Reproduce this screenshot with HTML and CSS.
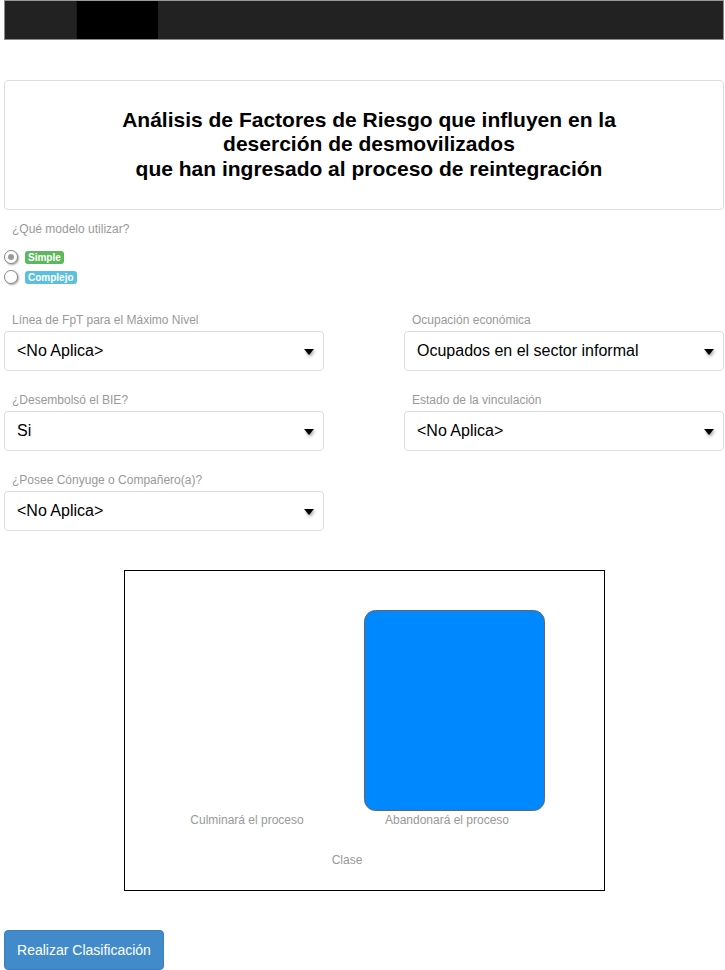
FILE: index.html
```html
<!DOCTYPE html>
<html lang="es">
<head>
<meta charset="utf-8">
<title>Análisis de Factores de Riesgo</title>
<link rel="stylesheet" href="styles.css">
</head>
<body>
<div class="page">
  <nav class="navbar"><div class="brand"></div></nav>

  <div class="panel">
    <h1 class="title">Análisis de Factores de Riesgo que influyen en la<br>deserción de desmovilizados<br>que han ingresado al proceso de reintegración</h1>
  </div>

  <div class="model">
    <div class="label">¿Qué modelo utilizar?</div>
    <div class="radios">
      <div class="radio-row"><span class="radio checked"></span><span class="badge green">Simple</span></div>
      <div class="radio-row"><span class="radio"></span><span class="badge blue">Complejo</span></div>
    </div>
  </div>

  <div class="form-grid">
    <div class="field">
      <div class="label">Línea de FpT para el Máximo Nivel</div>
      <div class="select"><span>&lt;No Aplica&gt;</span><span class="caret"></span></div>
    </div>
    <div class="field">
      <div class="label">Ocupación económica</div>
      <div class="select"><span>Ocupados en el sector informal</span><span class="caret"></span></div>
    </div>
    <div class="field">
      <div class="label">¿Desembolsó el BIE?</div>
      <div class="select"><span>Si</span><span class="caret"></span></div>
    </div>
    <div class="field">
      <div class="label">Estado de la vinculación</div>
      <div class="select"><span>&lt;No Aplica&gt;</span><span class="caret"></span></div>
    </div>
    <div class="field">
      <div class="label">¿Posee Cónyuge o Compañero(a)?</div>
      <div class="select"><span>&lt;No Aplica&gt;</span><span class="caret"></span></div>
    </div>
  </div>

  <div class="chart">
    <svg width="479" height="319" viewBox="0 0 479 319">
      <rect x="239.5" y="39.5" width="180" height="200" rx="11" ry="11" fill="#0088ff" stroke="#666" stroke-width="1"/>
      <text x="122" y="253" class="axis" text-anchor="middle">Culminará el proceso</text>
      <text x="322" y="253" class="axis" text-anchor="middle">Abandonará el proceso</text>
      <text x="222" y="293" class="axis" text-anchor="middle">Clase</text>
    </svg>
  </div>

  <button class="btn">Realizar Clasificación</button>
</div>
</body>
</html>
```

FILE: styles.css
```css
html, body {
  margin: 0;
  padding: 0;
  background: #fff;
  font-family: "Liberation Sans", Arial, sans-serif;
}
.page {
  width: 720px;
  margin-left: 4px;
  display: flex;
  flex-direction: column;
}
.navbar {
  height: 38px;
  background: #222;
  border: 1px solid #8a8a8a;
  border-top: 1px solid #9a9a9a;
  display: flex;
}
.brand {
  width: 81px;
  margin-left: 71px;
  background: #000;
  border-left: 1px solid #1a1a1a;
}
.panel {
  margin-top: 40px;
  height: 128px;
  border: 1px solid #ddd;
  border-radius: 4px;
  display: flex;
  align-items: center;
  justify-content: center;
}
.title {
  margin: 0;
  font-size: 21px;
  font-weight: bold;
  line-height: 24.5px;
  text-align: center;
  color: #000;
  padding: 0 0 1px 10px;
}
.label {
  font-size: 12px;
  color: #999;
  padding-left: 8px;
  line-height: 14px;
}
.model {
  margin-top: 12px;
}
.radios {
  margin-top: 14px;
  display: flex;
  flex-direction: column;
  gap: 6px;
}
.radio-row {
  display: flex;
  align-items: center;
  gap: 7px;
  height: 14px;
}
.radio {
  width: 12px;
  height: 12px;
  border-radius: 50%;
  border: 1px solid #8a8a8a;
  background: #fff;
  box-shadow: 1px 1px 2px rgba(0,0,0,0.35);
  display: flex;
  align-items: center;
  justify-content: center;
}
.radio.checked::after {
  content: "";
  width: 6px;
  height: 6px;
  border-radius: 50%;
  background: #9a9a9a;
}
.badge {
  font-size: 10px;
  font-weight: bold;
  color: #fff;
  padding: 1px 3px;
  border-radius: 3px;
  line-height: 11px;
}
.badge.green { background: #5cb85c; }
.badge.blue { background: #5bc0de; }

.form-grid {
  margin-top: 29px;
  display: grid;
  grid-template-columns: 320px 320px;
  column-gap: 80px;
  row-gap: 22px;
}
.field {
  display: flex;
  flex-direction: column;
  gap: 4px;
}
.select {
  height: 38px;
  border: 1px solid #ddd;
  border-radius: 4px;
  display: flex;
  align-items: center;
  justify-content: space-between;
  padding: 0 9px 0 12px;
  font-size: 16px;
  color: #000;
}
.caret {
  width: 0;
  height: 0;
  border-left: 5px solid transparent;
  border-right: 5px solid transparent;
  border-top: 6px solid #000;
  filter: drop-shadow(1px 2px 1.5px rgba(0,0,0,0.35));
  margin-top: 1px;
}
.chart {
  margin: 39px auto 0;
  width: 479px;
  height: 319px;
  border: 1px solid #000;
  display: flex;
}
.axis {
  font-family: "Liberation Sans", Arial, sans-serif;
  font-size: 12px;
  fill: #999;
}
.btn {
  margin-top: 39px;
  align-self: flex-start;
  width: 160px;
  height: 40px;
  background: #428bca;
  border: 1px solid #3b7fc0;
  border-radius: 4px;
  color: #fff;
  font-family: "Liberation Sans", Arial, sans-serif;
  font-size: 14px;
  padding: 0;
}
```
